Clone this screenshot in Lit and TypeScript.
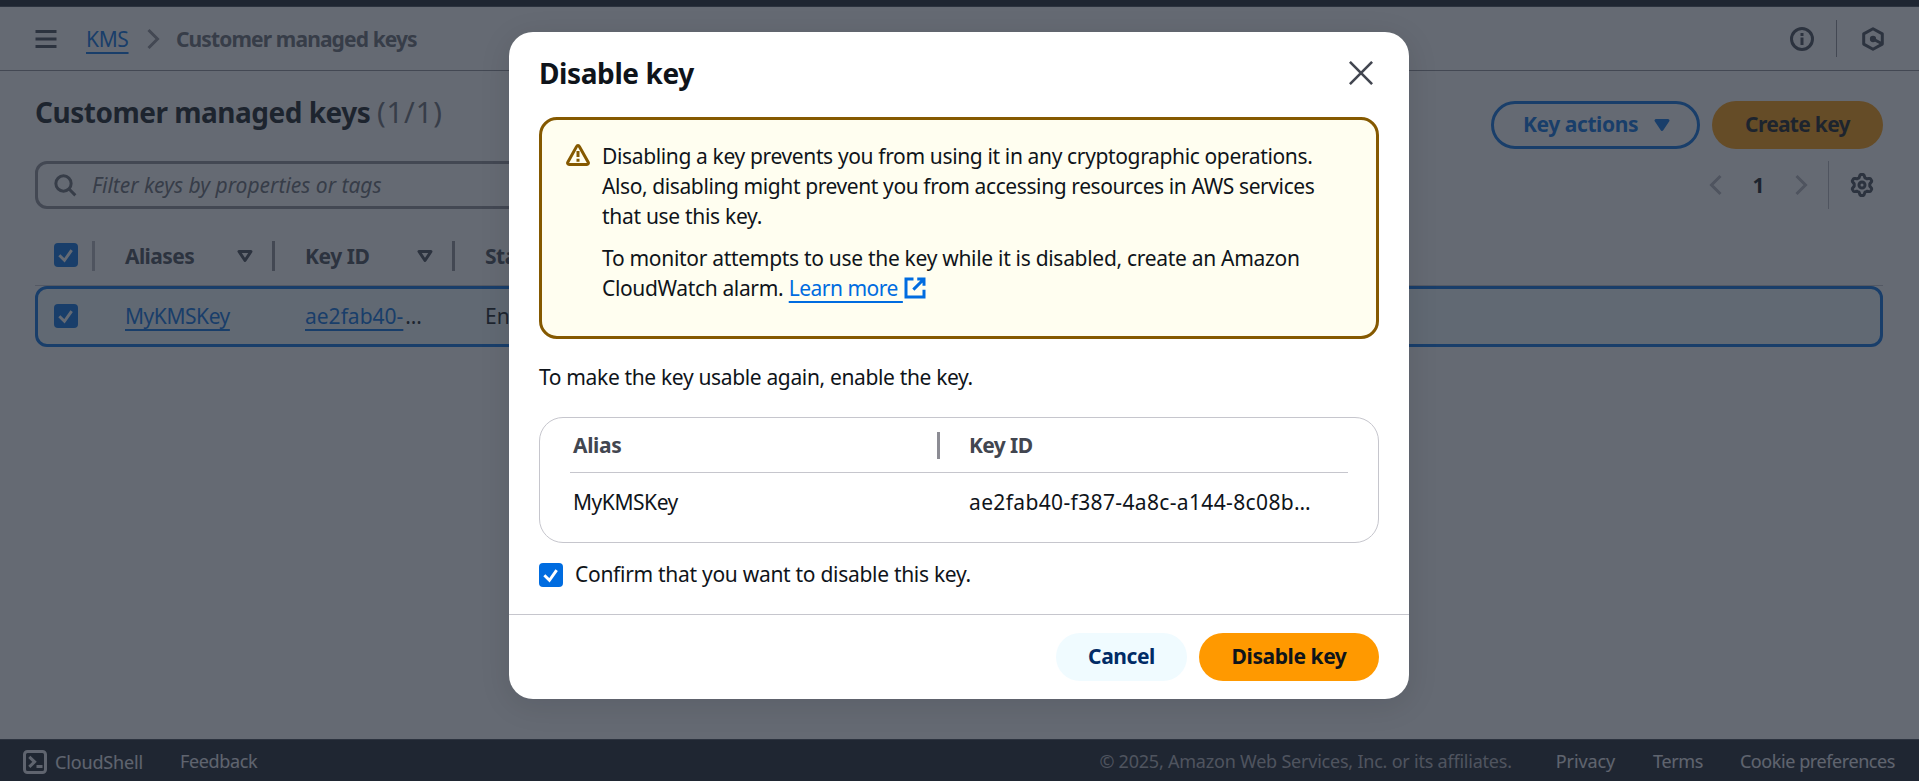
import { LitElement, html, css, svg, nothing } from "lit";
import { customElement } from "lit/decorators.js";

const gearPath = (() => {
  const pts: string[] = [];
  for (let i = 0; i < 96; i++) {
    const a = (i / 96) * Math.PI * 2 - Math.PI / 2;
    const wave = Math.max(-1, Math.min(1, 1.7 * Math.cos(6 * (a + Math.PI / 2))));
    const r = 6.1 + 0.9 * wave;
    pts.push(`${(8 + r * Math.cos(a)).toFixed(2)} ${(8 + r * Math.sin(a)).toFixed(2)}`);
  }
  return "M" + pts.join("L") + "Z";
})();

const glyphs: Record<string, unknown> = {
  menu: svg`<path d="M1 3h14M1 8h14M1 13h14"/>`,
  right: svg`<path d="m5 2 6 6-6 6"/>`,
  left: svg`<path d="M11 2 5 8l6 6"/>`,
  search: svg`<circle cx="7" cy="7" r="5.1"/><path d="m10.7 10.7 4.2 4.2"/>`,
  sort: svg`<path d="M4 5h8l-4 6Z" stroke-linejoin="round"/>`,
  caret: svg`<path d="M4 5h8l-4 6Z" fill="currentColor" stroke-linejoin="round"/>`,
  close: svg`<path d="m.6.6 14.8 14.8M15.4.6.6 15.4" stroke-width="1.75"/>`,
  warning: svg`<path d="M8.9 1.6 14.8 12.2a1 1 0 0 1-.9 1.5H2.1a1 1 0 0 1-.9-1.5L7.1 1.6a1 1 0 0 1 1.8 0Z"/><path d="M8 4.7v4M8 9.9v2"/>`,
  external: svg`<path d="M9.5 2H14v4.5M6.9 9.1 14 2M14 9.2V14H2V2h5"/>`,
  info: svg`<circle cx="8" cy="8" r="7"/><path d="M8 7v5M8 4v2"/>`,
  hexagon: svg`<path d="M8 1.2 14.2 4.6v6.8L8 14.8 1.8 11.4V4.6Z" stroke-width="2" stroke-linejoin="round"/><circle cx="8" cy="8" r="2.1" fill="currentColor" stroke="none"/><path d="m8.4 8.2 5.6 3" stroke-width="2"/>`,
  gear: svg`<path d="${gearPath}" stroke-linejoin="round"/><circle cx="8" cy="8" r="2"/>`,
  shell: svg`<rect x="1" y="1" width="14" height="14" rx="2"/><path d="m4.2 4.6 3.5 3.3-3.5 3.3M9 11h4"/>`,
  check: svg`<path d="m3.1 7.1 3 3 4.2-5.9" stroke-width="1.7"/>`,
};

const icon = (name: string, cls = "") =>
  html`<svg class="icon ${cls}" viewBox=${name === "check" ? "0 0 14 14" : "0 0 16 16"}>${glyphs[name] ?? nothing}</svg>`;

const base = css`
  * { box-sizing: border-box; }
  .icon { width: 24px; height: 24px; flex: none; display: block; fill: none; stroke: currentColor; stroke-width: 2; }
  .b { font-weight: 700; }
  .link { color: #006ce0; text-decoration: underline 2px; text-underline-offset: 5px; text-decoration-skip-ink: none; }
  .check { width: 24px; height: 24px; border-radius: 4px; background: #006ce0; color: #fff; flex: none; }
  .btn { height: 48px; border-radius: 24px; display: flex; align-items: center; justify-content: center; font-weight: 700; padding-bottom: 2px; letter-spacing: -0.42px; }
  .primary { background: #ff9900; color: #0f141a; }
  .n1 { letter-spacing: -0.15px; }
  .n2 { letter-spacing: -0.27px; }
  .n3 { letter-spacing: -0.35px; }
  .n4 { letter-spacing: -0.45px; }
  .n6 { letter-spacing: -0.6px; }
`;

@customElement("key-list-page")
export class KeyListPage extends LitElement {
  static styles = [base, css`
    :host { height: 100%; display: flex; flex-direction: column; background: #fff; color: #0f141a; }
    .top { height: 7px; flex: none; background: #161d26; border-bottom: 1px solid #424650; }
    .crumbs { height: 64px; flex: none; display: flex; align-items: center; border-bottom: 1px solid #8c8c94; padding: 0 34px; color: #424650; }
    .crumbs .text { height: 30px; }
    .kms { margin-left: 28px; width: 43px; }
    .sep { margin-left: 12px; color: #8c8c94; }
    .current { margin-left: 11px; color: #656871; letter-spacing: -0.88px; }
    .tools { margin-left: auto; display: flex; align-items: center; }
    .rule { width: 1px; background: #8c8c94; }
    .tools .rule { height: 37px; margin: 0 24px 0 22px; }
    .content { flex: 1; padding: 0 36px 0 35px; }
    .head { display: flex; height: 90px; justify-content: space-between; }
    .title { font-size: 28px; line-height: 36px; font-weight: 700; letter-spacing: -0.5px; padding-top: 23px; margin: 0; }
    .count { font-size: 29px; line-height: 30px; font-weight: 400; color: #656871; letter-spacing: 0.9px; }
    .actions { display: flex; gap: 12px; padding-top: 30px; }
    .menu { width: 209px; border: 3px solid #006ce0; color: #006ce0; gap: 12px; padding: 0 0 2px 6px; }
    .menu .icon { margin-top: 1px; }
    .create { width: 171px; letter-spacing: -0.7px; }
    .filter { display: flex; justify-content: space-between; height: 48px; }
    .input { width: 1020px; border: 3px solid #8c8c94; border-radius: 12px; display: flex; align-items: center; padding: 0 15px; color: #656871; font-style: italic; gap: 15px; }
    .pages { display: flex; align-items: center; padding-right: 9px; color: #424650; }
    .pages .off { color: #b4b4bb; }
    .num { color: #0f141a; width: 61px; text-align: center; }
    .pages .rule { height: 48px; margin: 0 21px 0 15px; background: #b4b4bb; }
    .grid { display: grid; grid-template-columns: 57px 180px 180px 180px 1fr; align-items: center; }
    .thead { height: 77px; padding: 17px 0 0; border-bottom: 1px solid #c6c6cd; color: #424650; }
    .grid .check { margin: -2px 0 0 19px; }
    .cell { height: 30px; display: flex; align-items: center; justify-content: space-between; border-left: 3px solid #8c8c94; padding: 0 15px 0 30px; }
    .cell.soft { border-color: #b4b4bb; }
    .row { height: 61px; border: 3px solid #006ce0; border-radius: 12px; background: #f0fbff; }
    .row .check { margin-left: 16px; }
    .row .val { padding-left: 33px; margin-left: -3px; height: 31px; }
    .dots { letter-spacing: 1px; margin-left: 2px; }
    .foot { height: 42px; flex: none; background: #161d26; border-top: 1px solid #424650; display: flex; align-items: center; font-size: 18px; color: #ebebf0; padding: 0 24px 0 23px; }
    .shell { display: flex; align-items: center; gap: 8px; padding-top: 3px; width: 157px; }
    .feedback { letter-spacing: -0.35px; }
    .copy { margin-left: auto; color: #b4b4bb; letter-spacing: -0.22px; margin-right: 44px; }
    .privacy { letter-spacing: -0.1px; }
    .terms { margin: 0 37px 0 38px; letter-spacing: -0.4px; }
    .cookie { letter-spacing: -0.42px; }
  `];

  render() {
    return html`
      <div class="top"></div>
      <nav class="crumbs">
        ${icon("menu")}
        <a class="link kms text n3">KMS</a>
        ${icon("right", "sep")}
        <span class="current b text">Customer managed keys</span>
        <div class="tools">${icon("info")}<span class="rule"></span>${icon("hexagon")}</div>
      </nav>
      <main class="content">
        <div class="head">
          <h1 class="title">Customer managed keys <span class="count">(1/1)</span></h1>
          <div class="actions">
            <div class="btn menu">Key actions ${icon("caret")}</div>
            <div class="btn primary create">Create key</div>
          </div>
        </div>
        <div class="filter">
          <div class="input">${icon("search")}<span>Filter keys by properties or tags</span></div>
          <div class="pages">
            ${icon("left", "off")}<span class="num b">1</span>${icon("right", "off")}
            <span class="rule"></span>${icon("gear")}
          </div>
        </div>
        <div class="grid thead">
          <div class="check">${icon("check")}</div>
          <div class="cell soft"><span class="b n6">Aliases</span>${icon("sort")}</div>
          <div class="cell"><span class="b n4">Key ID</span>${icon("sort")}</div>
          <div class="cell"><span class="b n4">Status</span></div>
        </div>
        <div class="grid row">
          <div class="check">${icon("check")}</div>
          <div class="val"><a class="link n4">MyKMSKey</a></div>
          <div class="val"><a class="link">ae2fab40-</a><span class="dots">…</span></div>
          <div class="val">Enabled</div>
        </div>
      </main>
      <footer class="foot">
        <div class="shell n1">${icon("shell")}CloudShell</div>
        <span class="feedback">Feedback</span>
        <span class="copy">© 2025, Amazon Web Services, Inc. or its affiliates.</span>
        <span class="privacy">Privacy</span><span class="terms">Terms</span><span class="cookie">Cookie preferences</span>
      </footer>
    `;
  }
}

@customElement("disable-key-dialog")
export class DisableKeyDialog extends LitElement {
  static styles = [base, css`
    :host { display: block; width: 900px; height: 667px; border-radius: 24px; background: #fff; color: #0f141a; box-shadow: 0 6px 30px 1px rgba(0, 7, 22, 0.1); }
    .head { display: flex; justify-content: space-between; align-items: flex-start; padding: 23px 36px 0 30px; height: 85px; }
    .head .icon { margin-top: 6px; color: #424650; }
    .title { margin: 0; font-size: 28px; line-height: 36px; font-weight: 700; letter-spacing: -0.4px; }
    .body { padding: 0 30px; height: 497px; }
    .alert { height: 222px; border: 3px solid #855900; border-radius: 18px; background: #fffef0; padding: 21px 24px; display: flex; gap: 12px; }
    .warn { color: #855900; margin-top: 3px; }
    p { margin: 0 0 12px; white-space: nowrap; }
    .l1 { letter-spacing: -0.36px; }
    .l2 { letter-spacing: -0.4px; }
    .l4 { letter-spacing: -0.3px; }
    .more { display: inline-flex; vertical-align: top; align-items: center; color: #006ce0; }
    .more .link { letter-spacing: -0.5px; }
    .more .icon { margin: -1px 0 0; }
    .note { height: 30px; margin: 23px 0 25px; }
    .box { height: 126px; border: 1px solid #c6c6cd; border-radius: 24px; padding: 0 30px; }
    .cols { display: grid; grid-template-columns: 370px 1fr; }
    .hdr { height: 55px; align-items: center; border-bottom: 1px solid #c6c6cd; color: #424650; }
    .hdr > * { padding-left: 3px; height: 27px; line-height: 26px; }
    .hdr > .second { border-left: 3px solid #8c8c94; margin-left: -3px; padding-left: 29px; }
    .vals { padding-top: 14px; }
    .vals > * { padding-left: 3px; }
    .vals > .second { padding-left: 29px; letter-spacing: 0.36px; }
    .confirm { display: flex; gap: 12px; margin-top: 20px; align-items: center; height: 24px; }
    .confirm span { height: 33px; letter-spacing: -0.29px; }
    .foot { height: 85px; border-top: 1px solid #c6c6cd; padding: 18px 30px 0; display: flex; justify-content: flex-end; gap: 12px; }
    .cancel { width: 131px; background: #f0fbff; color: #002b66; }
    .submit { width: 180px; }
  `];

  render() {
    return html`
      <header class="head"><h2 class="title">Disable key</h2>${icon("close")}</header>
      <section class="body">
        <div class="alert">
          ${icon("warning", "warn")}
          <div>
            <p>
              <span class="l1">Disabling a key prevents you from using it in any cryptographic operations.</span><br />
              <span class="l2">Also, disabling might prevent you from accessing resources in AWS services</span><br />
              <span class="l4">that use this key.</span>
            </p>
            <p>
              <span class="l4">To monitor attempts to use the key while it is disabled, create an Amazon</span><br />
              <span class="n3">CloudWatch alarm.</span> <span class="more"><a class="link">Learn more&nbsp;</a>${icon("external")}</span>
            </p>
          </div>
        </div>
        <div class="note n3">To make the key usable again, enable the key.</div>
        <div class="box">
          <div class="cols hdr b"><span class="n3">Alias</span><span class="second n6">Key ID</span></div>
          <div class="cols vals"><span class="n4">MyKMSKey</span><span class="second">ae2fab40-f387-4a8c-a144-8c08b…</span></div>
        </div>
        <div class="confirm"><div class="check">${icon("check")}</div><span>Confirm that you want to disable this key.</span></div>
      </section>
      <footer class="foot">
        <div class="btn cancel">Cancel</div>
        <div class="btn primary submit">Disable key</div>
      </footer>
    `;
  }
}

@customElement("app-root")
export class AppRoot extends LitElement {
  static styles = css`
    :host { display: block; position: relative; height: 100vh; overflow: hidden; font: 21px/30px "Noto Sans", "Open Sans", sans-serif; }
    .overlay { position: absolute; inset: 0; background: rgba(35, 43, 55, 0.7); display: flex; justify-content: center; align-items: flex-start; padding: 32px 1px 0 0; }
  `;

  render() {
    return html`
      <key-list-page></key-list-page>
      <div class="overlay"><disable-key-dialog></disable-key-dialog></div>
    `;
  }
}
